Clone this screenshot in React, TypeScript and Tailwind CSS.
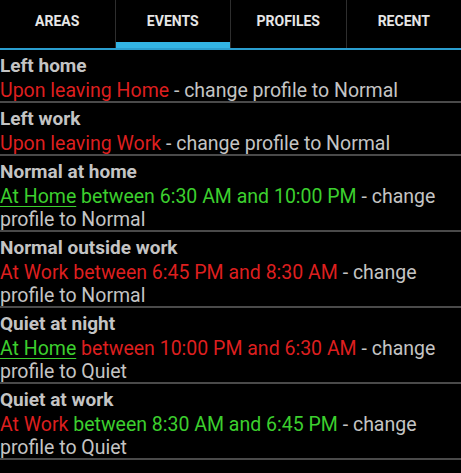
import React from 'react';

type Part = { text: string; color: 'red' | 'green' | 'gray'; underline?: boolean };

interface EventItem {
  title: string;
  parts: Part[];
}

const tabs = ['AREAS', 'EVENTS', 'PROFILES', 'RECENT'];

const events: EventItem[] = [
  {
    title: 'Left home',
    parts: [
      { text: 'Upon leaving Home', color: 'red' },
      { text: ' - change profile to Normal', color: 'gray' },
    ],
  },
  {
    title: 'Left work',
    parts: [
      { text: 'Upon leaving Work', color: 'red' },
      { text: ' - change profile to Normal', color: 'gray' },
    ],
  },
  {
    title: 'Normal at home',
    parts: [
      { text: 'At Home', color: 'green', underline: true },
      { text: ' between 6:30 AM and 10:00 PM', color: 'green' },
      { text: ' - change profile to Normal', color: 'gray' },
    ],
  },
  {
    title: 'Normal outside work',
    parts: [
      { text: 'At Work between 6:45 PM and 8:30 AM', color: 'red' },
      { text: ' - change profile to Normal', color: 'gray' },
    ],
  },
  {
    title: 'Quiet at night',
    parts: [
      { text: 'At Home', color: 'green', underline: true },
      { text: ' between 10:00 PM and 6:30 AM', color: 'red' },
      { text: ' - change profile to Quiet', color: 'gray' },
    ],
  },
  {
    title: 'Quiet at work',
    parts: [
      { text: 'At Work', color: 'red' },
      { text: ' between 8:30 AM and 6:45 PM', color: 'green' },
      { text: ' - change profile to Quiet', color: 'gray' },
    ],
  },
];

const colorClass = {
  red: 'text-[#dd1f1f]',
  green: 'text-[#3ccf2e]',
  gray: 'text-[#c4c4c4]',
};

const App: React.FC = () => {
  return (
    <div className="w-[461px] h-[473px] bg-black overflow-hidden font-['Roboto',sans-serif]">
      {/* Tab bar */}
      <div className="flex h-[50px] border-b-2 border-[#2a9ecf]">
        {tabs.map((tab, i) => (
          <div
            key={tab}
            className={`flex-1 flex items-center justify-center relative ${i > 0 ? 'border-l border-[#2e2e2e]' : ''}`}
          >
            <span className="text-[14px] font-bold text-[#e6e6e6] -mt-[6px]">{tab}</span>
            {tab === 'EVENTS' && (
              <div className="absolute left-0 right-0 bottom-0 h-[6px] bg-[#33b5e5]" />
            )}
          </div>
        ))}
      </div>

      {/* Event list */}
      <div className="flex flex-col">
        {events.map(ev => (
          <div key={ev.title} className="border-b-2 border-[#4a4a4a] pt-[3px]">
            <div className="text-[19px] font-bold text-[#c4c4c4] leading-[26px]">{ev.title}</div>
            <div className="text-[19.5px] leading-[23px] -mb-[1px]">
              {ev.parts.map((p, j) => (
                <span key={j} className={`${colorClass[p.color]} ${p.underline ? 'underline underline-offset-[3px]' : ''}`}>
                  {p.text}
                </span>
              ))}
            </div>
          </div>
        ))}
      </div>
    </div>
  );
};

export default App;
